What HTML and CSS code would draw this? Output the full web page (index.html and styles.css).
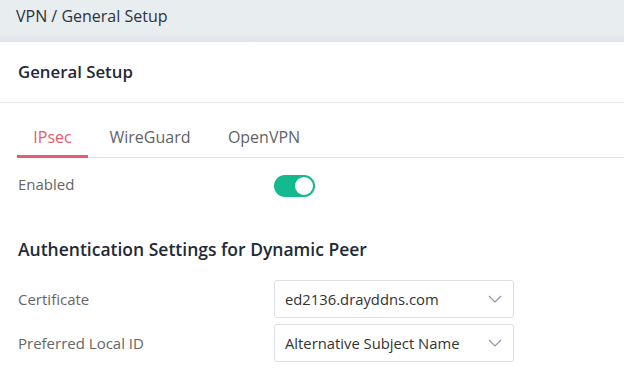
FILE: index.html
```html
<!DOCTYPE html>
<html>
<head>
<meta charset="utf-8">
<link rel="stylesheet" href="styles.css">
</head>
<body>
<div class="crumb">VPN / General Setup</div>
<div class="card">
  <div class="card-title">General Setup</div>
  <div class="card-body">
    <div class="tabs">
      <div class="tab active">IPsec</div>
      <div class="tab">WireGuard</div>
      <div class="tab">OpenVPN</div>
    </div>
    <div class="row enabled-row">
      <div class="label">Enabled</div>
      <div class="toggle"><span class="knob"></span></div>
    </div>
    <div class="section-title">Authentication Settings for Dynamic Peer</div>
    <div class="row field-row">
      <div class="label">Certificate</div>
      <div class="select"><span>ed2136.drayddns.com</span><svg class="chev" width="14" height="8" viewBox="0 0 14 8"><path d="M1 1 L7 7 L13 1" fill="none" stroke="#8a98a8" stroke-width="1.2"/></svg></div>
    </div>
    <div class="row field-row">
      <div class="label">Preferred Local ID</div>
      <div class="select"><span>Alternative Subject Name</span><svg class="chev" width="14" height="8" viewBox="0 0 14 8"><path d="M1 1 L7 7 L13 1" fill="none" stroke="#8a98a8" stroke-width="1.2"/></svg></div>
    </div>
  </div>
</div>
</body>
</html>
```
FILE: styles.css
```css
* { box-sizing: border-box; }
html, body { margin: 0; padding: 0; }
body {
  font-family: "Open Sans", "Noto Sans", sans-serif;
  background: #fff;
  color: #333;
  width: 624px;
  height: 381px;
  overflow: hidden;
}
.crumb {
  height: 42px;
  padding: 4px 0 0 16px;
  font-size: 16px;
  line-height: 24px;
  color: #2b3340;
  background: linear-gradient(to bottom, #e8edf0 0, #e8edf0 33px, #dde4e8 42px);
}
.card { background: #fff; }
.card-title {
  height: 61px;
  padding: 18px 0 0 18px;
  font-size: 16.8px;
  font-weight: 600;
  line-height: 24px;
  color: #1e2a38;
  border-bottom: 1px solid #e7e7e7;
}
.card-body { padding: 0 0 0 17px; }
.tabs {
  display: flex;
  margin-top: 20px;
  border-bottom: 1px solid #e3e3e3;
}
.tab {
  padding: 2px 0 6px;
  font-size: 16px;
  line-height: 24px;
  color: #5f6368;
  text-align: center;
  border-bottom: 3px solid transparent;
  margin-bottom: -1px;
}
.tab:nth-child(1) { width: 71px; }
.tab:nth-child(2) { width: 124px; }
.tab:nth-child(3) { width: 96px; margin-left: 4px; }
.tab.active {
  color: #e85a6c;
  border-bottom-color: #e85a6c;
}
.row { display: flex; align-items: center; }
.label {
  width: 257px;
  padding-left: 1px;
  font-size: 15px;
  color: #666;
}
.enabled-row { margin-top: 17px; height: 22px; }
.enabled-row .label { margin-top: -4px; }
.toggle {
  width: 41px;
  height: 22px;
  border-radius: 11px;
  background: #14ba8d;
  position: relative;
}
.knob {
  position: absolute;
  right: 2px;
  top: 2px;
  width: 18px;
  height: 18px;
  border-radius: 50%;
  background: #fff;
}
.section-title {
  margin-top: 40px;
  padding-left: 1px;
  font-size: 17.5px;
  font-weight: 600;
  line-height: 24px;
  color: #1e2a38;
}
.field-row { height: 38px; margin-top: 6px; }
.section-title + .field-row { margin-top: 19px; }
.select {
  width: 240px;
  height: 38px;
  border: 1px solid #dcdfe3;
  border-radius: 3px;
  display: flex;
  align-items: center;
  justify-content: space-between;
  padding: 0 10px 0 10px;
  font-size: 14.8px;
  color: #333;
}
.chev { margin-right: 1px; }
```
